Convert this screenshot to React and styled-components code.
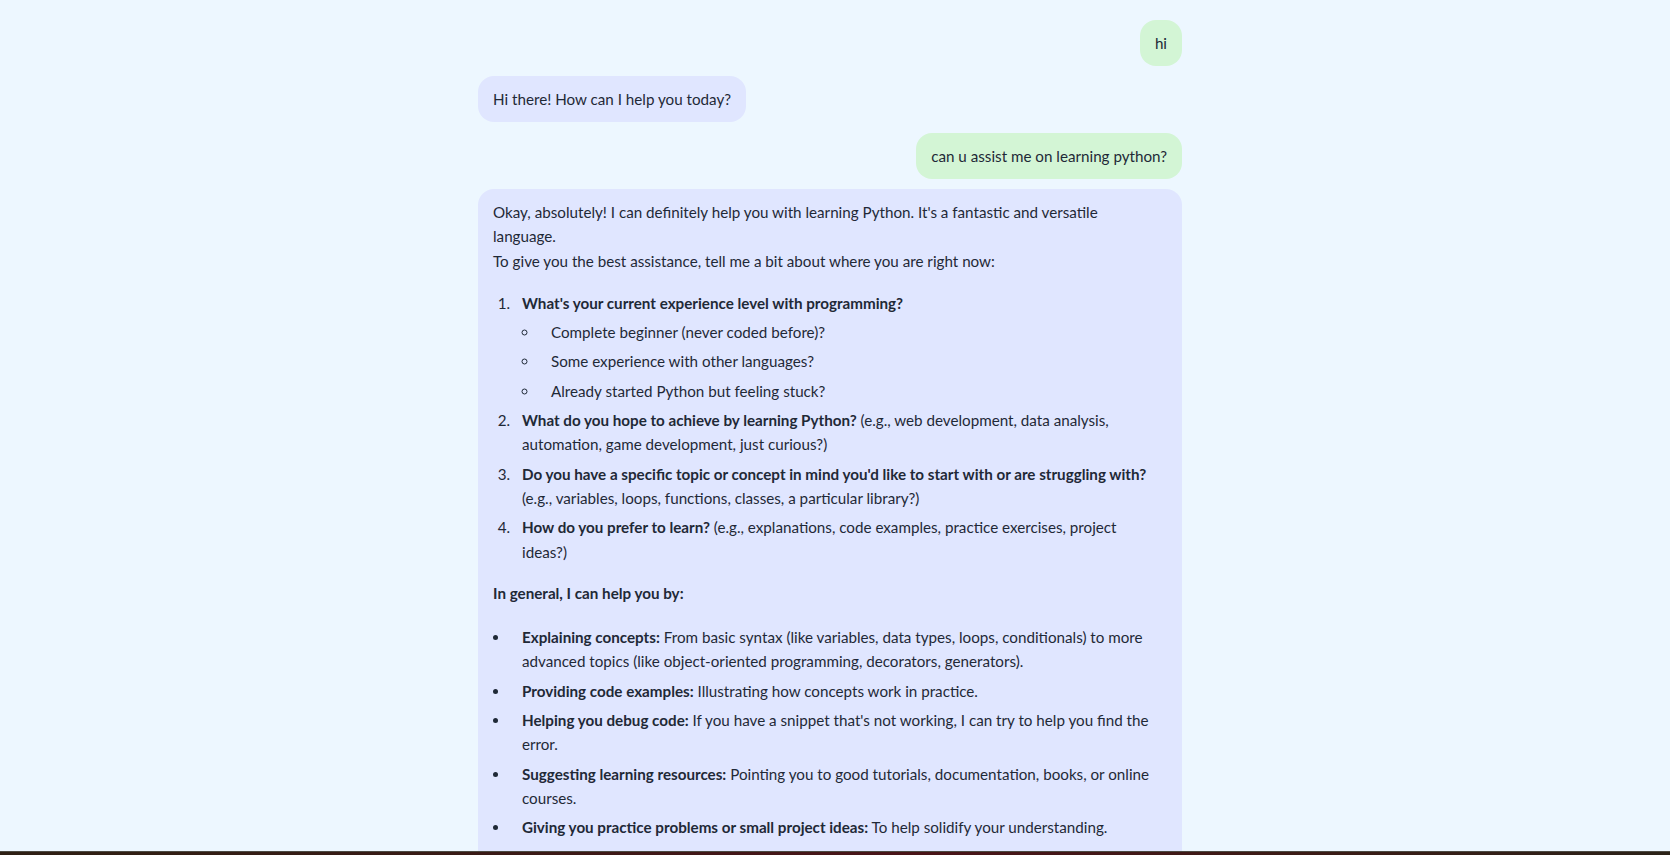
import React from 'react';
import styled, { createGlobalStyle } from 'styled-components';

const GlobalStyle = createGlobalStyle`
    html, body {
        margin: 0;
        padding: 0;
        background: #edf7ff;
        font-family: Lato, "Noto Sans", sans-serif;
        color: #1f2937;
    }
`

const Page = styled.div`
    height: 100vh;
    display: flex;
    flex-direction: column;
    overflow: hidden;
`

const ChatArea = styled.div`
    flex: 1;
    overflow: hidden;
    padding: 20px 10px 0 0;
`

const Thread = styled.div`
    width: 704px;
    margin: 0 auto;
    display: flex;
    flex-direction: column;
    gap: 10.5px;
`

const Bubble = styled.div`
    align-self: ${props => (props.$user ? 'flex-end' : 'flex-start')};
    background: ${props => (props.$user ? '#d3f5d5' : '#e0e6ff')};
    border-radius: 16px;
    padding: 10.8px 15px;
    font-size: 15.2px;
    line-height: 24.3px;
    box-sizing: border-box;
    max-width: 100%;
`

// long answers keep a little air on the right
const Answer = styled.div`
    padding-right: 6px;
`

const Para = styled.p`
    margin: 0;
`

const Item = styled.li`
    margin-top: 5px;
    padding-left: 12px;
`

const Ordered = styled.ol`
    margin: 18px 0 17px;
    padding-left: 21px;

    & > ${Item} {
        padding-left: 8px;
    }
`

const Bullets = styled.ul`
    margin: ${props => (props.$nested ? '0' : '20px 0 0')};
    padding-left: 17px;
    list-style-type: ${props => (props.$nested ? 'circle' : 'disc')};
`

const Strong = styled.strong`
    font-weight: 700;
`

const Footer = styled.div`
    height: 3px;
    border-top: 1px solid #4d4a42;
    background: linear-gradient(90deg, #2e2014 0%, #3a1a16 30%, #4a1418 55%, #3a1c16 80%, #2b2218 100%);
`

class App extends React.Component {
    render() {
        return (
            <Page>
                <GlobalStyle />
                <ChatArea>
                    <Thread>
                        <Bubble $user>hi</Bubble>
                        <Bubble>Hi there! How can I help you today?</Bubble>
                        <Bubble $user>can u assist me on learning python?</Bubble>
                        <Bubble>
                            <Answer>
                                <Para>
                                    Okay, absolutely! I can definitely help you with learning Python. It's a fantastic and versatile language.
                                    <br />
                                    To give you the best assistance, tell me a bit about where you are right now:
                                </Para>
                                <Ordered>
                                    <Item>
                                        <Strong>What's your current experience level with programming?</Strong>
                                        <Bullets $nested>
                                            <Item>Complete beginner (never coded before)?</Item>
                                            <Item>Some experience with other languages?</Item>
                                            <Item>Already started Python but feeling stuck?</Item>
                                        </Bullets>
                                    </Item>
                                    <Item>
                                        <Strong>What do you hope to achieve by learning Python?</Strong> (e.g., web development, data analysis, automation, game development, just curious?)
                                    </Item>
                                    <Item>
                                        <Strong>Do you have a specific topic or concept in mind you'd like to start with or are struggling with?</Strong> (e.g., variables, loops, functions, classes, a particular library?)
                                    </Item>
                                    <Item>
                                        <Strong>How do you prefer to learn?</Strong> (e.g., explanations, code examples, practice exercises, project ideas?)
                                    </Item>
                                </Ordered>
                                <Para>
                                    <Strong>In general, I can help you by:</Strong>
                                </Para>
                                <Bullets>
                                    <Item>
                                        <Strong>Explaining concepts:</Strong> From basic syntax (like variables, data types, loops, conditionals) to more advanced topics (like object-oriented programming, decorators, generators).
                                    </Item>
                                    <Item>
                                        <Strong>Providing code examples:</Strong> Illustrating how concepts work in practice.
                                    </Item>
                                    <Item>
                                        <Strong>Helping you debug code:</Strong> If you have a snippet that's not working, I can try to help you find the error.
                                    </Item>
                                    <Item>
                                        <Strong>Suggesting learning resources:</Strong> Pointing you to good tutorials, documentation, books, or online courses.
                                    </Item>
                                    <Item>
                                        <Strong>Giving you practice problems or small project ideas:</Strong> To help solidify your understanding.
                                    </Item>
                                    <Item>
                                        <Strong>Reviewing your specific code:</Strong> If you want feedback on something you've written.
                                    </Item>
                                </Bullets>
                            </Answer>
                        </Bubble>
                    </Thread>
                </ChatArea>
                <Footer />
            </Page>
        )
    }
}

export default App;
